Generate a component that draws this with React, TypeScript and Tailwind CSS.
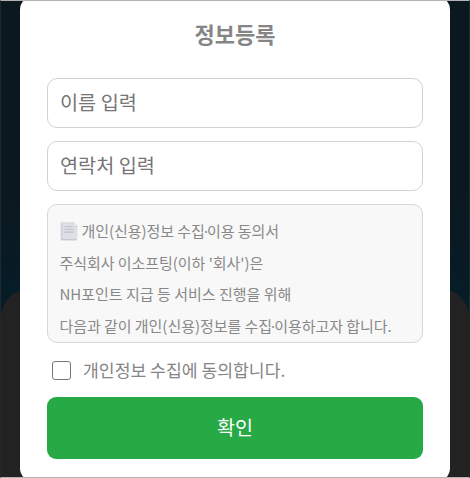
import { useState } from 'react';

const terms = [
  { text: "주식회사 이소프팅(이하 '회사')은", spacing: '-mt-px tracking-[-0.05px]' },
  { text: 'NH포인트 지급 등 서비스 진행을 위해', spacing: 'tracking-normal' },
  { text: '다음과 같이 개인(신용)정보를 수집·이용하고자 합니다.', spacing: 'tracking-[-0.05px]' },
];

function TermText({ text }: { text: string }) {
  const [before, after] = text.split('·');
  return (
    <span>
      {before}
      {after !== undefined && <span className="-mx-[0.9px] font-['Noto_Sans']">·</span>}
      {after}
    </span>
  );
}

function PageIcon() {
  return (
    <svg viewBox="0 0 18 19" className="mr-[4px] h-[19px] w-[18px] shrink-0">
      <path d="M1 .8h12.5l3.3 3.5v13.4H1z" fill="#dfdfe7" stroke="#d3d3dd" strokeWidth=".7" />
      <path d="M13.5 .8l-.2 3.7 3.5-.2z" fill="#f8f8fa" stroke="#c4c4d0" strokeWidth=".6" />
      <path d="M1 17.7V1.4h2v16.3z" fill="#d3d3dd" />
      <path d="M4.5 4.5h7M4.5 7.3h9M4.5 10.1h9" stroke="#bdbdca" strokeWidth="1.1" />
      <path d="M1 17.8h15.5" stroke="#bfbfcd" />
    </svg>
  );
}

export default function App() {
  const [agreed, setAgreed] = useState(false);
  return (
    <main className="relative flex h-[478px] w-[470px] items-center justify-center overflow-hidden bg-linear-to-b from-[#0c181f] from-40% to-[#061c27] to-60% font-['Noto_Sans_CJK_KR',sans-serif]">
      <div className="absolute inset-x-px top-[289px] h-[220px] rounded-t-[28px] bg-[#222222]" />
      <form
        className="relative h-[486px] w-[430px] shrink-0 rounded-[14px] bg-white px-[27px] pt-[21px]"
        onSubmit={(e) => e.preventDefault()}
      >
        <h1 className="h-[61px] text-center text-[22px] leading-[32px] font-bold text-[#858585]">정보등록</h1>
        <input
          aria-label="이름"
          placeholder="이름 입력"
          className="mb-[13px] block h-[50px] w-[376px] rounded-[10px] border border-[#d2d2d2] pr-[11px] pb-[3px] pl-[12px] text-[19.7px] text-[#757575] outline-none placeholder:text-[#757575]"
        />
        <input
          aria-label="연락처"
          placeholder="연락처 입력"
          className="mb-[13px] block h-[50px] w-[376px] rounded-[10px] border border-[#d2d2d2] pr-[11px] pb-[3px] pl-[12px] text-[19.7px] text-[#757575] outline-none placeholder:text-[#757575]"
        />
        <section className="h-[139px] w-[376px] overflow-hidden rounded-[10px] border border-[#d6d6d6] bg-[#f8f8f8] px-[11.5px] pt-[10px] text-[15px] leading-[31.5px] whitespace-nowrap text-[#888888]">
          <p className="flex items-center tracking-[-0.05px]">
            <PageIcon />
            <TermText text="개인(신용)정보 수집·이용 동의서" />
          </p>
          {terms.map(({ text, spacing }) => (
            <p key={text} className={spacing}>
              <TermText text={text} />
            </p>
          ))}
        </section>
        <label className="mt-[13px] ml-[5px] flex h-[28px] items-center text-[17.2px] leading-[28px] text-[#858585]">
          <input
            type="checkbox"
            checked={agreed}
            onChange={(e) => setAgreed(e.target.checked)}
            className="mr-[12px] size-[19px] appearance-none rounded-[3px] border border-[#767676] bg-white checked:bg-[#28a745]"
          />
          개인정보 수집에 동의합니다.
        </label>
        <button className="mt-[13px] block h-[62px] w-[376px] rounded-[9px] bg-[#27a945] pb-[2px] text-[19.6px] text-white">
          확인
        </button>
      </form>
      <div className="pointer-events-none absolute inset-0 border border-[#b4b4b4] border-x-[#1d292f]" />
    </main>
  );
}
